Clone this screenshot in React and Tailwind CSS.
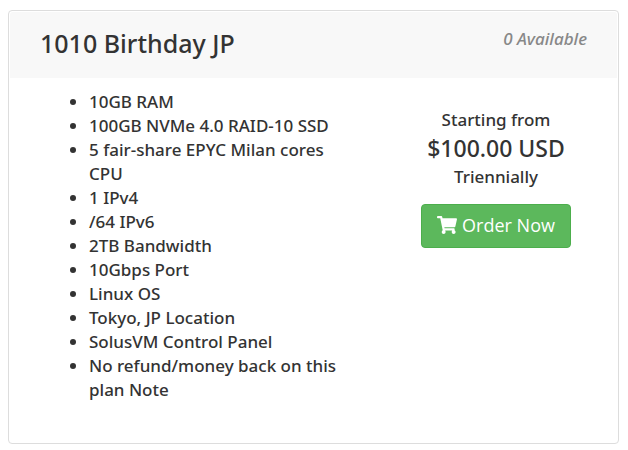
import { FaShoppingCart } from "react-icons/fa";

const features = [
  "10GB RAM",
  "100GB NVMe 4.0 RAID-10 SSD",
  "5 fair-share EPYC Milan cores CPU",
  "1 IPv4",
  "/64 IPv6",
  "2TB Bandwidth",
  "10Gbps Port",
  "Linux OS",
  "Tokyo, JP Location",
  "SolusVM Control Panel",
  "No refund/money back on this plan Note",
];

export default function App() {
  return (
    <main className="pt-[10px] pr-[9px] pb-2 pl-2 font-['Noto_Sans',sans-serif] text-[#333]">
      <article className="rounded border border-[#ddd] bg-white pb-[41px]">
        <header className="m-px flex items-start justify-between rounded-t-[3px] bg-[#f8f8f8] pt-[13px] pr-[30px] pb-[17px] pl-[30px]">
          <h2 className="text-[25px] leading-9 font-medium">1010 Birthday JP</h2>
          <span className="pt-[2px] text-[17px] leading-6 font-medium text-[#888] italic">0 Available</span>
        </header>

        <div className="flex justify-between pt-[11px] pr-[47px] pl-10">
          <ul className="w-[300px] list-disc pl-10 text-[17px] leading-6 font-medium">
            {features.map((feature) => (
              <li key={feature}>{feature}</li>
            ))}
          </ul>

          <div className="flex w-[150px] flex-col items-center pt-[18px] text-[17px] leading-6 font-medium">
            <span>Starting from</span>
            <span className="text-[23px] leading-[33px] whitespace-nowrap">$100.00 USD</span>
            <span>Triennially</span>
            <button
              type="button"
              className="mt-[15px] flex h-11 w-full items-center justify-center gap-[5px] rounded border border-[#4cae4c] bg-[#5cb85c] pb-[2px] font-['Open_Sans',sans-serif] text-lg font-normal text-white hover:bg-[#449d44]"
            >
              <FaShoppingCart className="size-5" aria-hidden="true" />
              Order Now
            </button>
          </div>
        </div>
      </article>
    </main>
  );
}
